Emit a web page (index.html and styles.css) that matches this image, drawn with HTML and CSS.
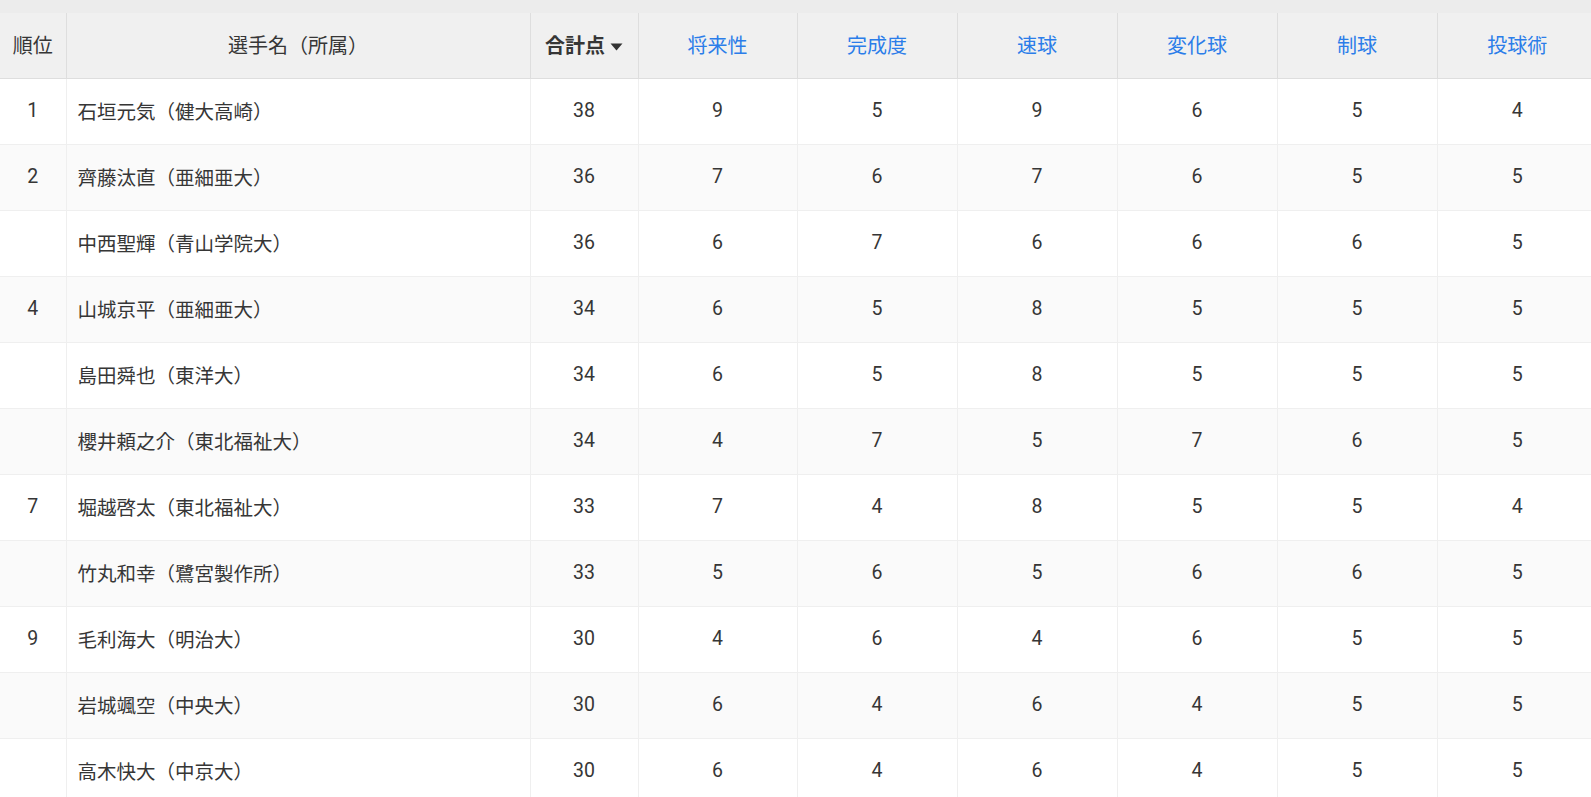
FILE: index.html
```html
<!DOCTYPE html>
<html lang="ja">
<head>
<meta charset="utf-8">
<title>ランキング</title>
<link rel="stylesheet" href="styles.css">
</head>
<body>
<div class="wrap">
<table class="rank">
<colgroup>
<col class="c-rank"><col class="c-name"><col class="c-total"><col class="c-sc1"><col class="c-sc"><col class="c-sc"><col class="c-sc"><col class="c-sc"><col class="c-sc">
</colgroup>
<thead>
<tr>
<th>順位</th>
<th>選手名（所属）</th>
<th class="sorted">合計点<svg class="caret" width="13" height="8" viewBox="0 0 13 8"><path d="M0.5 0.5h12L6.5 7.5z" fill="#333"/></svg></th>
<th class="link">将来性</th>
<th class="link">完成度</th>
<th class="link">速球</th>
<th class="link">変化球</th>
<th class="link">制球</th>
<th class="link">投球術</th>
</tr>
</thead>
<tbody>
<tr><td>1</td><td class="name">石垣元気（健大高崎）</td><td>38</td><td>9</td><td>5</td><td>9</td><td>6</td><td>5</td><td>4</td></tr>
<tr><td>2</td><td class="name">齊藤汰直（亜細亜大）</td><td>36</td><td>7</td><td>6</td><td>7</td><td>6</td><td>5</td><td>5</td></tr>
<tr><td></td><td class="name">中西聖輝（青山学院大）</td><td>36</td><td>6</td><td>7</td><td>6</td><td>6</td><td>6</td><td>5</td></tr>
<tr><td>4</td><td class="name">山城京平（亜細亜大）</td><td>34</td><td>6</td><td>5</td><td>8</td><td>5</td><td>5</td><td>5</td></tr>
<tr><td></td><td class="name">島田舜也（東洋大）</td><td>34</td><td>6</td><td>5</td><td>8</td><td>5</td><td>5</td><td>5</td></tr>
<tr><td></td><td class="name">櫻井頼之介（東北福祉大）</td><td>34</td><td>4</td><td>7</td><td>5</td><td>7</td><td>6</td><td>5</td></tr>
<tr><td>7</td><td class="name">堀越啓太（東北福祉大）</td><td>33</td><td>7</td><td>4</td><td>8</td><td>5</td><td>5</td><td>4</td></tr>
<tr><td></td><td class="name">竹丸和幸（鷺宮製作所）</td><td>33</td><td>5</td><td>6</td><td>5</td><td>6</td><td>6</td><td>5</td></tr>
<tr><td>9</td><td class="name">毛利海大（明治大）</td><td>30</td><td>4</td><td>6</td><td>4</td><td>6</td><td>5</td><td>5</td></tr>
<tr><td></td><td class="name">岩城颯空（中央大）</td><td>30</td><td>6</td><td>4</td><td>6</td><td>4</td><td>5</td><td>5</td></tr>
<tr><td></td><td class="name">高木快大（中京大）</td><td>30</td><td>6</td><td>4</td><td>6</td><td>4</td><td>5</td><td>5</td></tr>
</tbody>
</table>
</div>
</body>
</html>
```

FILE: styles.css
```css
html, body {
  margin: 0;
  padding: 0;
  overflow: hidden;
}
body {
  background: #ececec;
  font-family: Roboto, "Noto Sans CJK JP", sans-serif;
  color: #363636;
}
.wrap {
  padding-top: 13px;
  width: 1596px;
}
.rank {
  border-collapse: collapse;
  table-layout: fixed;
  width: 1596px;
  background: #fff;
  font-size: 19.5px;
}
.c-rank { width: 66px; }
.c-name { width: 464px; }
.c-total { width: 108px; }
.c-sc1 { width: 159px; }
.c-sc { width: 160px; }
.rank th {
  background: #f0f0f0;
  font-weight: 400;
  font-size: 20px;
  height: 63px;
  padding: 0 0 2px;
  text-align: center;
  border-right: 1px solid #dedede;
  border-bottom: 1px solid #dedede;
}
.rank th:last-child { border-right: none; }
.rank th.sorted { font-weight: 700; }
.rank th.link { color: #2b7de9; }
.caret { margin-left: 5px; vertical-align: 2px; }
.rank td {
  height: 63px;
  padding: 0 0 2px;
  text-align: center;
  border-right: 1px solid #efefef;
  border-bottom: 1px solid #efefef;
}
.rank td:last-child { border-right: none; }
.rank td.name {
  text-align: left;
  padding-left: 11px;
}
.rank tbody tr:nth-child(even) td { background: #fafafa; }
```
